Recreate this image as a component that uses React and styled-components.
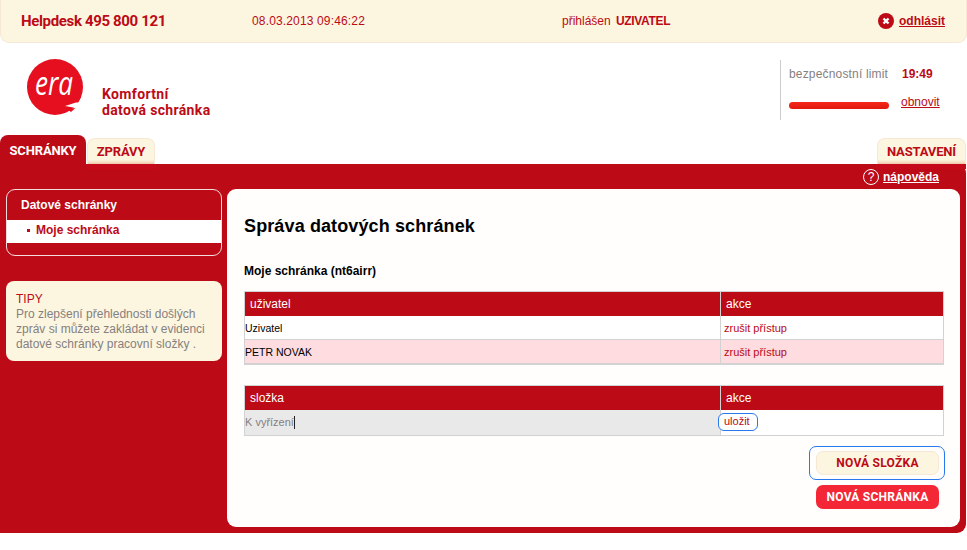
import React from "react";
import styled, { createGlobalStyle } from "styled-components";

const red = "#bc0a16";
const cream = "#fcf6e0";
const brandFont = `"Roboto", "Noto Sans", sans-serif`;

const GlobalStyle = createGlobalStyle`
  html, body {
    margin: 0;
    padding: 0;
    background: #fff;
    font-family: "Liberation Sans", Arial, sans-serif;
    font-size: 12px;
  }
`;

const Page = styled.div`
  width: 967px;
  height: 550px;
  overflow: hidden;
`;

const TopBar = styled.header`
  box-sizing: border-box;
  height: 43px;
  display: grid;
  grid-template-columns: 231px 310px 1fr auto;
  align-items: center;
  padding: 0 21px 0 20px;
  background: ${cream};
  border: 1px solid #f6e8d4;
  border-top: 0;
  border-radius: 0 0 9px 9px;
  color: ${red};
`;

const Helpdesk = styled.div`
  font-family: ${brandFont};
  font-weight: 700;
  font-size: 15px;
  letter-spacing: -0.35px;
`;

const DateTime = styled.div`
  letter-spacing: 0.15px;
`;

const Login = styled.div`
  b {
    font-weight: 700;
    margin-left: 2px;
    letter-spacing: -0.35px;
  }
`;

const Logout = styled.a`
  display: flex;
  align-items: center;
  gap: 5px;
  font-weight: 700;
  text-decoration: underline;
  color: ${red};
`;

const Brand = styled.div`
  height: 92px;
  display: flex;
  justify-content: space-between;
  padding-left: 27px;
`;

const LogoGroup = styled.div`
  display: flex;
  gap: 18px;
  padding-top: 16px;
`;

const LogoText = styled.div`
  font-family: ${brandFont};
  font-weight: 700;
  font-size: 14px;
  letter-spacing: 0.35px;
  line-height: 16px;
  color: ${red};
  padding-top: 27px;
`;

const Limit = styled.div`
  width: 187px;
  height: 60px;
  margin-top: 17px;
  box-sizing: border-box;
  border-left: 1px solid #ccc;
  padding-left: 8px;
  display: grid;
  grid-template-columns: 112px auto;
  grid-template-rows: 28px 32px;
  align-items: center;
  color: #85807f;
`;

const LimitLabel = styled.span`
  letter-spacing: 0.17px;
`;

const Countdown = styled.b`
  color: ${red};
  padding-left: 1px;
`;

const LimitBar = styled.div`
  width: 100px;
  height: 7px;
  margin-top: 3px;
  border-radius: 4px;
  background: linear-gradient(#f5281a, #e01a10);
`;

const Renew = styled.a`
  color: ${red};
  font-weight: 400;
  text-decoration: underline;
  margin-top: -4px;
`;

const Tabs = styled.nav`
  height: 29px;
  display: flex;
  align-items: flex-end;
  gap: 1px;
`;

const Tab = styled.div`
  box-sizing: border-box;
  position: relative;
  z-index: 1;
  height: ${(p) => (p.$active ? "29px" : "26px")};
  width: ${(p) => p.$width}px;
  display: flex;
  align-items: flex-start;
  justify-content: center;
  font-family: ${brandFont};
  font-weight: 700;
  font-size: 13px;
  letter-spacing: -0.15px;
  line-height: 26px;
  border-radius: 8px 8px 0 0;
  background: ${(p) =>
    p.$active ? red : `linear-gradient(${cream} 82%, #f6e2c8 92%, #eec3a8)`};
  color: ${(p) => (p.$active ? "#fff" : red)};
  border: ${(p) => (p.$active ? "0" : "1px solid #f6e8d4")};
  border-bottom: 0;
  padding-top: ${(p) => (p.$active ? "3px" : "0")};
  margin-left: ${(p) => (p.$push ? "auto" : "0")};
  margin-right: ${(p) => (p.$push ? "1px" : "0")};

  &::after {
    content: ${(p) => (p.$active ? "none" : '""')};
    position: absolute;
    top: 100%;
    left: -1px;
    right: -1px;
    height: 5px;
    background: #c5091a;
  }
`;

const Panel = styled.main`
  width: 966px;
  height: 369px;
  box-sizing: border-box;
  background: ${red};
  border-radius: 0 9px 9px 0;
  padding: 5px 6px 6px 6px;
`;

const HelpRow = styled.div`
  height: 20px;
  display: flex;
  justify-content: flex-end;
  align-items: flex-start;
  gap: 4px;
  padding-right: 21px;
  color: #fff;
  position: relative;
  z-index: 2;
`;

const HelpIcon = styled.span`
  box-sizing: border-box;
  width: 16px;
  height: 16px;
  border: 1px solid #fff;
  border-radius: 50%;
  display: flex;
  align-items: center;
  justify-content: center;
  font-size: 12px;
`;

const HelpLink = styled.a`
  font-weight: 700;
  text-decoration: underline;
  line-height: 16px;
`;

const Columns = styled.div`
  display: flex;
  gap: 5px;
`;

const Sidebar = styled.aside`
  width: 216px;
  display: flex;
  flex-direction: column;
  gap: 25px;
`;

const MenuBox = styled.div`
  box-sizing: border-box;
  height: 67px;
  border: 1px solid #f4dcdc;
  border-radius: 9px;
  overflow: hidden;
`;

const MenuTitle = styled.div`
  height: 30px;
  padding-left: 14px;
  line-height: 30px;
  color: #fff;
  font-weight: 700;
`;

const MenuItem = styled.div`
  box-sizing: border-box;
  height: 23px;
  background: #fff;
  color: ${red};
  font-weight: 700;
  padding: 0 0 3px 20px;
  display: flex;
  gap: 6px;
  align-items: center;

  &::before {
    content: "";
    width: 3px;
    height: 3px;
    background: ${red};
  }
`;

const Tip = styled.div`
  box-sizing: border-box;
  height: 80px;
  background: ${cream};
  border-radius: 8px;
  padding: 11px 10px;
  color: #85807f;
  line-height: 15px;
`;

const TipTitle = styled.div`
  color: ${red};
  font-size: 12px;
`;

const Content = styled.section`
  box-sizing: border-box;
  width: 733px;
  height: 338px;
  background: #fffefc;
  border-radius: 9px;
  padding: 26px 16px 0 17px;
`;

const Title = styled.h1`
  margin: 0;
  font-size: 18px;
  line-height: 22px;
  font-weight: 700;
  letter-spacing: 0.12px;
  color: #000;
`;

const Subtitle = styled.h2`
  margin: 27px 0 13px;
  font-size: 12px;
  line-height: 14px;
  font-weight: 700;
  color: #000;
`;

const Table = styled.div`
  width: 700px;
  border: 1px solid #d2d2d2;
  border-bottom-width: ${(p) => p.$bottom || 1}px;
  box-sizing: border-box;
  margin-bottom: 20px;
`;

const Row = styled.div`
  display: grid;
  grid-template-columns: 475px 1fr;
  height: ${(p) => p.$h}px;
  box-sizing: border-box;
  background: ${(p) => p.$bg || "#fff"};
  border-top: ${(p) => (p.$line ? "1px solid #d2d2d2" : "0")};
`;

const HeadCell = styled.div`
  background: ${red};
  color: #fff;
  font-size: 12px;
  line-height: 24px;
  padding-left: 5px;
  & + & {
    border-left: 1px solid #d2d2d2;
  }
`;

const Cell = styled.div`
  font-size: 10.5px;
  line-height: 24px;
  color: #000;
  position: relative;
  background: ${(p) => p.$bg || "transparent"};
  & + & {
    border-left: 1px solid #d2d2d2;
    padding-left: 3px;
    color: ${red};
    font-size: 11px;
  }
`;

const FolderName = styled.span`
  color: #85807f;
  border-right: 1px solid #222;
  font-size: 11px;
  padding-bottom: 1px;
`;

const SaveLink = styled.span`
  position: absolute;
  left: -3px;
  top: 3px;
  box-sizing: border-box;
  width: 40px;
  height: 18px;
  border: 1px solid #2a78ee;
  border-radius: 6px;
  padding-left: 5px;
  line-height: 15px;
  background: #fff;
  color: ${red};
`;

const Actions = styled.div`
  width: 700px;
  display: flex;
  flex-direction: column;
  align-items: flex-end;
  gap: 5px;
  margin-top: -10px;
`;

const Focus = styled.div`
  box-sizing: border-box;
  width: 136px;
  height: 34px;
  margin-right: -1px;
  padding: 4px 6px;
  border: 1px solid #2a78ee;
  border-radius: 7px;
`;

const Button = styled.div`
  box-sizing: border-box;
  width: 123px;
  height: 24px;
  border-radius: 7px;
  display: flex;
  align-items: center;
  justify-content: center;
  font-family: ${brandFont};
  font-weight: 700;
  font-size: 12px;
  letter-spacing: 0.25px;
  margin-right: ${(p) => (p.$primary ? "5px" : "0")};
  background: ${(p) => (p.$primary ? "#f32735" : cream)};
  color: ${(p) => (p.$primary ? "#fff" : red)};
  border: ${(p) => (p.$primary ? "0" : "1px solid #f6e8d4")};
`;

const EraLogo = () => (
  <svg width="57" height="58" viewBox="0 0 57 58">
    <circle cx="28" cy="28" r="28" fill="#e60f1f" />
    <path d="M38 47L49 43.500H57V49H49z" fill="#fff" />
    <path d="M40 50L48.500 49 44 53z" fill="#e60f1f" />
    <text
      x="8"
      y="36"
      fill="#fff"
      fontFamily="'Open Sans', sans-serif"
      fontStyle="italic"
      fontSize="32"
      textLength="38"
      lengthAdjust="spacingAndGlyphs"
    >
      era
    </text>
  </svg>
);

const CloseIcon = () => (
  <svg width="16" height="16" viewBox="0 0 16 16">
    <circle cx="8" cy="8" r="8" fill={red} />
    <path d="M5.500 5.500l5 5M10.500 5.500l-5 5" stroke="#fff" strokeWidth="2.400" />
  </svg>
);

export default function App() {
  return (
    <Page>
      <GlobalStyle />
      <TopBar>
        <Helpdesk>Helpdesk 495 800 121</Helpdesk>
        <DateTime>08.03.2013 09:46:22</DateTime>
        <Login>
          přihlášen <b>UZIVATEL</b>
        </Login>
        <Logout>
          <CloseIcon />
          odhlásit
        </Logout>
      </TopBar>
      <Brand>
        <LogoGroup>
          <EraLogo />
          <LogoText>
            Komfortní
            <br />
            datová schránka
          </LogoText>
        </LogoGroup>
        <Limit>
          <LimitLabel>bezpečnostní limit</LimitLabel>
          <Countdown>19:49</Countdown>
          <LimitBar />
          <Renew>obnovit</Renew>
        </Limit>
      </Brand>
      <Tabs>
        <Tab $active $width={86}>SCHRÁNKY</Tab>
        <Tab $width={68}>ZPRÁVY</Tab>
        <Tab $push $width={89}>NASTAVENÍ</Tab>
      </Tabs>
      <Panel>
        <HelpRow>
          <HelpIcon>?</HelpIcon>
          <HelpLink>nápověda</HelpLink>
        </HelpRow>
        <Columns>
          <Sidebar>
            <MenuBox>
              <MenuTitle>Datové schránky</MenuTitle>
              <MenuItem>Moje schránka</MenuItem>
            </MenuBox>
            <Tip>
              <TipTitle>TIPY</TipTitle>
              Pro zlepšení přehlednosti došlých zpráv si můžete zakládat v evidenci datové schránky
              pracovní složky .
            </Tip>
          </Sidebar>
          <Content>
            <Title>Správa datových schránek</Title>
            <Subtitle>Moje schránka (nt6airr)</Subtitle>
            <Table $bottom={2}>
              <Row $h={24}>
                <HeadCell>uživatel</HeadCell>
                <HeadCell>akce</HeadCell>
              </Row>
              <Row $h={23}>
                <Cell>Uzivatel</Cell>
                <Cell>zrušit přístup</Cell>
              </Row>
              <Row $h={24} $line $bg="#ffdcdf">
                <Cell>PETR NOVAK</Cell>
                <Cell>zrušit přístup</Cell>
              </Row>
            </Table>
            <Table>
              <Row $h={23}>
                <HeadCell>složka</HeadCell>
                <HeadCell>akce</HeadCell>
              </Row>
              <Row $line $h={26}>
                <Cell $bg="#e9e9e9">
                  <FolderName>K vyřízení</FolderName>
                </Cell>
                <Cell>
                  <SaveLink>uložit</SaveLink>
                </Cell>
              </Row>
            </Table>
            <Actions>
              <Focus>
                <Button>NOVÁ SLOŽKA</Button>
              </Focus>
              <Button $primary>NOVÁ SCHRÁNKA</Button>
            </Actions>
          </Content>
        </Columns>
      </Panel>
    </Page>
  );
}
